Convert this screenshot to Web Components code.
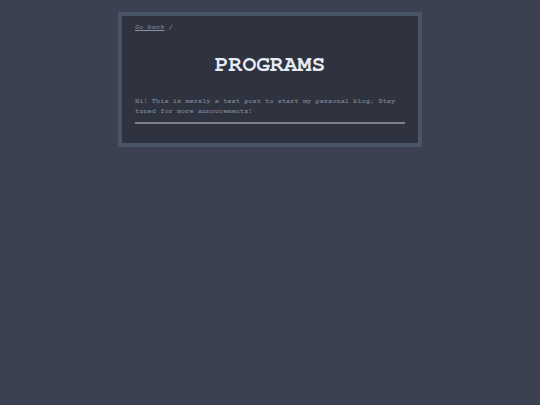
<!DOCTYPE html>
<html lang="en">
<head>
<meta charset="utf-8">
<meta name="viewport" content="width=device-width, initial-scale=1">
<title>Programs</title>
<style>
    body {
        margin: 0;
        padding: 12px;
        background-color: #3c4151;
        color: #8d909d;
        font: 7px/10px "Courier Prime", "Liberation Mono", "Courier New", monospace;
    }
</style>
</head>
<body>
<blog-page>
    <blog-nav slot="nav" href="#">Go back</blog-nav>
    <span slot="title">PROGRAMS</span>
    <blog-post>Hi! This is merely a test post to start my personal blog. Stay tuned for more annoucements!</blog-post>
</blog-page>
<script>
class BlogPage extends HTMLElement {
    constructor() {
        super();
        this.attachShadow({ mode: 'open' });
    }

    connectedCallback() {
        this.shadowRoot.innerHTML = `
        <style>
            :host {
                display: block;
                box-sizing: border-box;
                max-width: 304px;
                margin: 0 auto;
                padding: 7px 13px 19px;
                border: 4px solid #4a5467;
                background-color: #2f333f;
            }
            h1 {
                margin: 20px 0;
                color: #e7ebf5;
                font-family: "Nimbus Mono PS", "FreeMono", "Liberation Mono", monospace;
                font-size: 23px;
                line-height: 24px;
                text-align: center;
            }
        </style>
        <slot name="nav"></slot>
        <main>
            <h1><slot name="title"></slot></h1>
            <slot></slot>
        </main>
    `;
    }
}

class BlogNav extends HTMLElement {
    constructor() {
        super();
        this.attachShadow({ mode: 'open' });
    }

    connectedCallback() {
        const href = this.getAttribute('href') || '#';
        this.shadowRoot.innerHTML = `
        <style>
            :host {
                display: block;
            }
            a {
                color: inherit;
                font-style: italic;
            }
        </style>
        <nav><a href="${href}"><slot></slot></a> /</nav>
    `;
    }
}

class BlogPost extends HTMLElement {
    constructor() {
        super();
        this.attachShadow({ mode: 'open' });
    }

    connectedCallback() {
        this.shadowRoot.innerHTML = `
        <style>
            :host {
                display: block;
                padding-bottom: 5px;
                border-bottom: 2px solid #7d818b;
            }
            p {
                margin: 0;
            }
        </style>
        <p><slot></slot></p>
    `;
    }
}

customElements.define('blog-page', BlogPage);
customElements.define('blog-nav', BlogNav);
customElements.define('blog-post', BlogPost);
</script>
</body>
</html>
